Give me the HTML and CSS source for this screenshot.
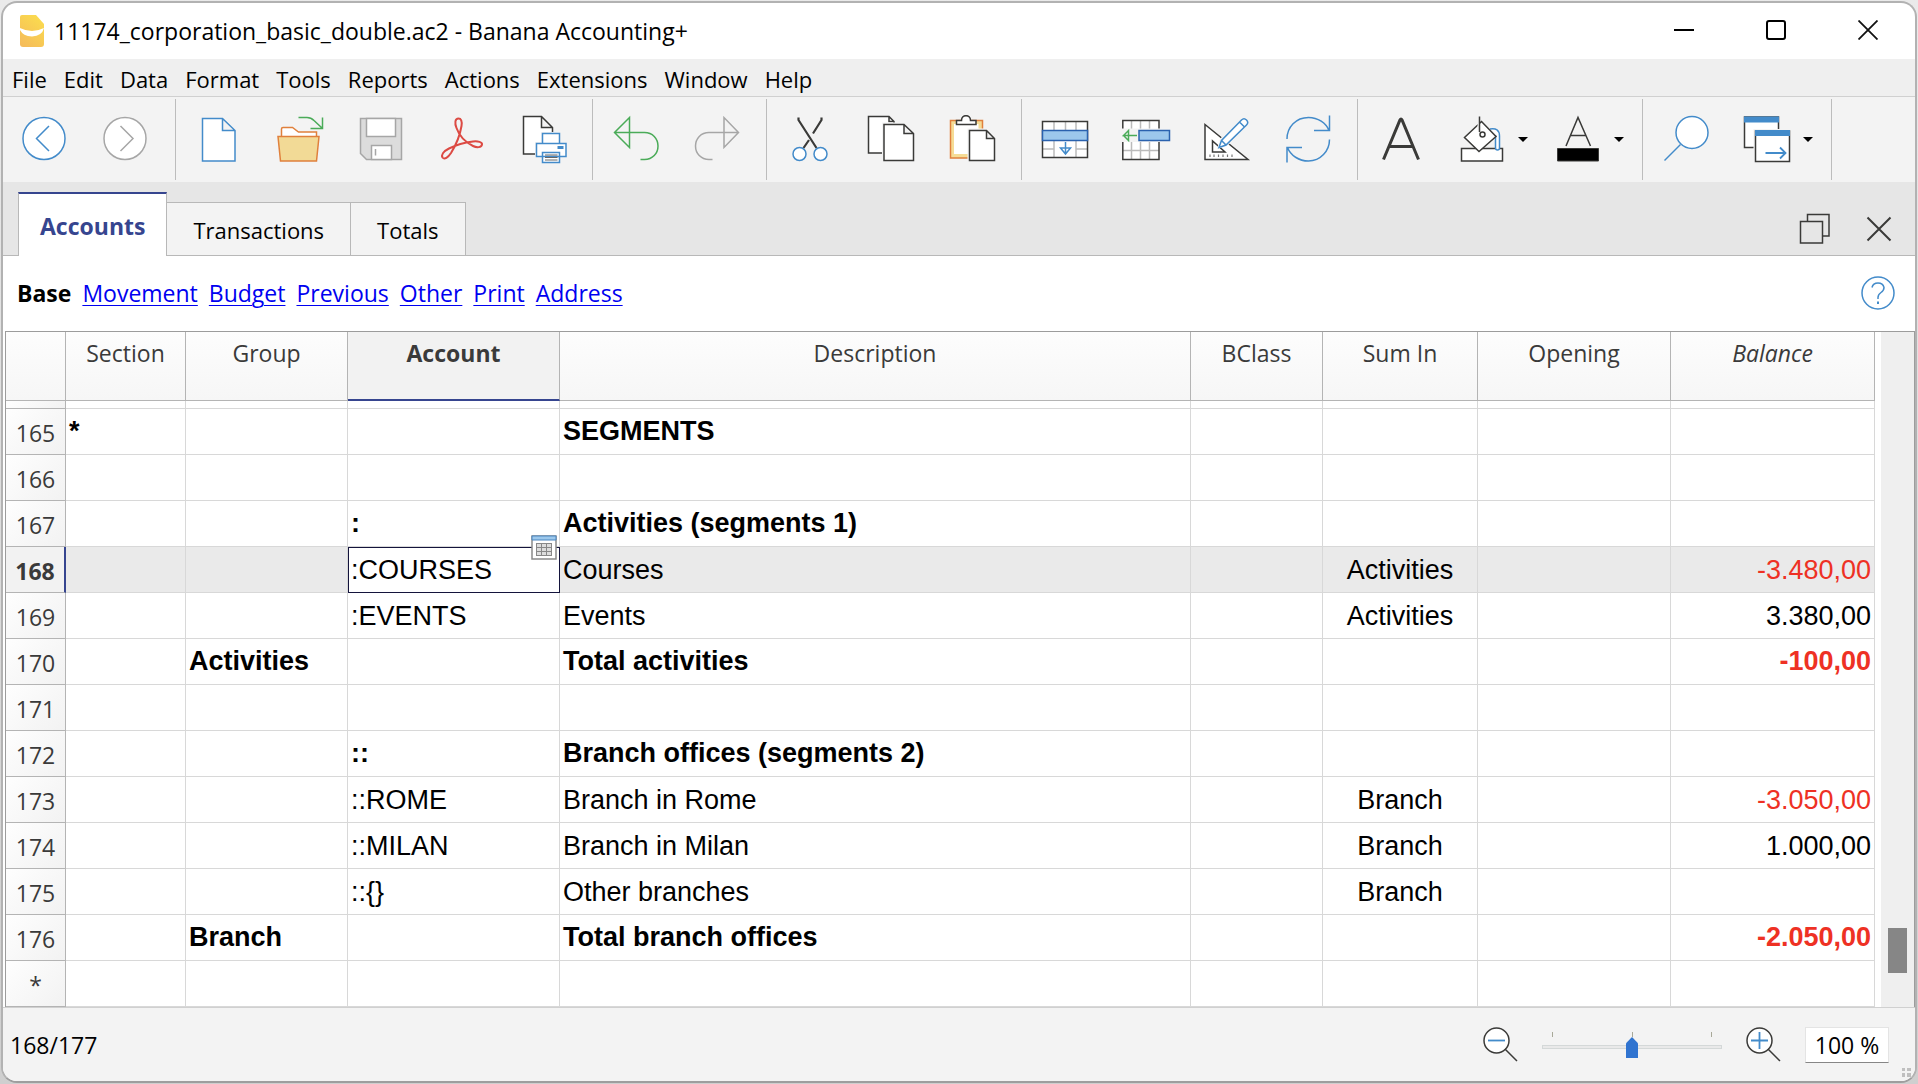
FILE: index.html
```html
<!DOCTYPE html>
<html lang="en">
<head>
<meta charset="utf-8">
<meta name="viewport" content="width=device-width, initial-scale=1">
<title>11174_corporation_basic_double.ac2 - Banana Accounting+</title>
<link rel="stylesheet" href="styles.css">
</head>
<body>
<div class="window">
  <header class="titlebar">
    <svg class="app-icon" viewBox="0 0 26 34" aria-hidden="true">
      <defs><linearGradient id="banana" x1="0.8" y1="0" x2="0.2" y2="1"><stop offset="0" stop-color="#fbdc4e"/><stop offset="1" stop-color="#f5bc5a"/></linearGradient></defs>
      <path d="M3 1H17L25 10V30Q25 33 22 33H4Q1 33 1 30V3Q1 1 3 1Z" fill="url(#banana)"/>
      <path d="M1 14Q13 20 25 14Q23 22 13 22.500Q4 22 1 16Z" fill="#fff"/>
    </svg>
    <h1 class="title">11174_corporation_basic_double.ac2 - Banana Accounting+</h1>
    <div class="window-controls">
      <button type="button" aria-label="Minimize"><svg viewBox="0 0 20 20"><path d="M0 10H20" stroke="#000" stroke-width="2"/></svg></button>
      <button type="button" aria-label="Maximize"><svg viewBox="0 0 20 20"><rect x="1" y="1" width="18" height="18" rx="2" fill="none" stroke="#000" stroke-width="2"/></svg></button>
      <button type="button" aria-label="Close"><svg viewBox="0 0 20 20"><path d="M0.500 0.500L19.500 19.500M19.500 0.500L0.500 19.500" stroke="#111" stroke-width="1.800"/></svg></button>
    </div>
  </header>

  <nav class="menubar" aria-label="Menu">
    <button type="button">File</button>
    <button type="button">Edit</button>
    <button type="button">Data</button>
    <button type="button">Format</button>
    <button type="button">Tools</button>
    <button type="button">Reports</button>
    <button type="button">Actions</button>
    <button type="button">Extensions</button>
    <button type="button">Window</button>
    <button type="button">Help</button>
  </nav>

  <div class="toolbar" role="toolbar" aria-label="Main tools">
    <div class="tool-group">
      <button type="button" aria-label="Back"><svg viewBox="0 0 49 49"><circle cx="25" cy="23.500" r="21" class="wb"/><path d="M30 11L17.500 23.500L30 36" class="b"/></svg></button>
      <button type="button" aria-label="Forward"><svg viewBox="0 0 49 49"><circle cx="25" cy="23.500" r="21" class="wg"/><path d="M20.500 11L33 23.500L20.500 36" class="g"/></svg></button>
    </div>
    <div class="tool-group">
      <button type="button" aria-label="New"><svg viewBox="0 0 49 49"><path d="M7.500 3.500H27.500L40 15.500V46H7.500ZM27.500 3.500V15.500H40" class="wb"/></svg></button>
      <button type="button" aria-label="Open"><svg viewBox="0 0 49 49"><path d="M5.500 21.500V14Q5.500 12.500 7 12.500H16.500L22.500 17H40.500V21.500" fill="#fff" stroke="#e0803c" stroke-width="1.500"/><path d="M2 21.500H43L40.500 46H4.500Z" fill="#f2da96" stroke="#e0803c" stroke-width="1.500"/><path d="M22.500 2.500H31Q35 2.500 38 5.500L46 13M46.500 2.500V13.500H34.500" class="gr"/></svg></button>
      <button type="button" aria-label="Save"><svg viewBox="0 0 49 49"><path d="M3.500 3.500H44.500V44.500H9.500L3.500 38.500Z" fill="#dcdcdc" stroke="#a6a6a6" stroke-width="1.500"/><path d="M9.500 3.500H38.500V21.500H9.500ZM14.500 30.500H34.500V44.500H14.500Z" class="wg"/><path d="M18.500 34V40.500" class="g"/></svg></button>
      <button type="button" aria-label="Export PDF"><svg viewBox="0 0 49 49"><path d="M20.500 3.500C17 3.500 16.500 8 18.500 13C21 20 27 27 35 31C39 33 43.500 32.500 44 29.500C44.500 27 40 26 35 26.500C27 27.500 18 30 11 33.500C5 36.500 3 40 4.500 42.500C6.500 45 10 42.500 13 38C18 30 22 20 23.500 11C24.300 6 23 3.500 20.500 3.500Z" fill="none" stroke="#dc4a43" stroke-width="2"/></svg></button>
      <button type="button" aria-label="Print"><svg viewBox="0 0 49 49"><path d="M4.500 1.500H22.500L33.500 12.500V39H4.500ZM22.500 1.500V12.500H33.500" class="wk"/><path d="M16 27H22V17H43V27H49V43H43V49H22V43H16Z" fill="#f3f3f3"/><path d="M23.500 18.500H40.500V28.500H23.500ZM17.500 28.500H47V41.500H17.500ZM23.500 37.500H40.500V47.500H23.500Z" class="wb"/><path d="M38.500 32.500H44.500" stroke="#438bca" stroke-width="3"/><path d="M26 40H38.500M26 42.500H38.500M26 45H38.500" stroke="#666" stroke-width="1.200"/></svg></button>
    </div>
    <div class="tool-group">
      <button type="button" aria-label="Undo"><svg viewBox="0 0 49 49"><path d="M17.500 2.500V32.500L2.500 17.500ZM2.500 17.500H32.500C40.500 17.500 46 23.500 46 31S40.500 44.500 32.500 44.500H28.500" class="gr"/></svg></button>
      <button type="button" aria-label="Redo"><svg viewBox="0 0 49 49"><path d="M31 2.500V32.500L45.500 17.500ZM45.500 17.500H16C8 17.500 2.500 23.500 2.500 31S8 44.500 16 44.500H19.500" class="g"/></svg></button>
    </div>
    <div class="tool-group">
      <button type="button" aria-label="Cut"><svg viewBox="0 0 49 49"><path d="M12.500 2.500V5L30.500 33M35.500 2.500V5L27 18.500M23 25L17.500 33" fill="none" stroke="#3a3a38" stroke-width="2.200"/><circle cx="13.500" cy="39" r="6.500" class="wb"/><circle cx="34.500" cy="39" r="6.500" class="wb"/></svg></button>
      <button type="button" aria-label="Copy"><svg viewBox="0 0 49 49"><path d="M1.500 1.500H22L27 6.500V38H1.500ZM22 1.500V6.500H27" class="wk"/><path d="M15 7.500H38L49 18V49H15Z" fill="#f3f3f3"/><path d="M17 9.500H37L46.500 18.500V45.500H17ZM37 9.500V18.500H46.500" class="wk"/></svg></button>
      <button type="button" aria-label="Paste"><svg viewBox="0 0 49 49"><path d="M2.500 5.500H34.500V43H2.500Z" fill="#f5dc96" stroke="#e0803c" stroke-width="1.500"/><path d="M6 9H30.500V39H6Z" fill="#fff"/><path d="M8.500 5.500H13.500C13.500 -1 22.500 -1 22.500 5.500H28V9.500H8.500Z" class="wk"/><path d="M19.500 13.500H40L49 22V48H19.500Z" fill="#f3f3f3"/><path d="M21.500 15.500H38.500L46.500 23.500V45.500H21.500ZM38.500 15.500V23.500H46.500" class="wk"/></svg></button>
    </div>
    <div class="tool-group">
      <button type="button" aria-label="Add rows"><svg viewBox="0 0 49 49"><path d="M1.500 6.500H46.500V42.500H1.500Z" fill="#fff"/><path d="M13 6.500V42.500M24.500 6.500V16M35 6.500V42.500M1.500 34H13M35 34H46.500" stroke="#bbb" stroke-width="1.500"/><path d="M1.500 6.500H46.500V42.500H1.500Z" fill="none" stroke="#3a3a38" stroke-width="1.500"/><path d="M1.500 15.500H46.500V25.500H1.500Z" class="bar"/><path d="M24.500 27V39M19.500 33H29.500L24.500 39Z" class="b"/></svg></button>
      <button type="button" aria-label="Delete rows"><svg viewBox="0 0 49 49"><path d="M0.800 5.500H37V44.500H0.800Z" fill="#fff"/><path d="M9.500 6V14M18.500 6V14M27.500 6V14M9.500 27V44M18.500 27V44M27.500 27V44M1 35.500H37" stroke="#bbb" stroke-width="1.500"/><path d="M0 13.500H38V27H0Z" fill="#f3f3f3"/><path d="M0.800 13.500V5.500H37V13.500M0.800 27V44.500H37V27" fill="none" stroke="#3a3a38" stroke-width="1.500"/><path d="M17 15.500H47.500V25.500H17Z" class="bar"/><path d="M15 20.500H1.500L6.500 15.500V25.500L1.500 20.500" class="gr"/></svg></button>
      <button type="button" aria-label="Columns setup"><svg viewBox="0 0 49 49"><path d="M2 9.500V44.500H45Z" class="wk"/><path d="M9.500 26V37H22Z" class="wk"/><path d="M7 42V39.500M11 42V39.500M15.500 42V39.500M20 42V39.500M24.500 42V39.500M29 42V39.500" stroke="#777" stroke-width="1.200"/><path d="M14 34L17 24L37 2L42 1L47 7L46 11L24 31Z" fill="#f3f3f3"/><path d="M16 32.500L18.500 25.500L38.500 5Q41 2.500 43.500 5T43.500 10L23 30ZM18.500 25.500L23 30M36.500 7L41.500 12" class="wb"/></svg></button>
      <button type="button" aria-label="Recalculate"><svg viewBox="0 0 49 49"><path d="M3 24C3 12 12 2.500 24.500 2.500C34 2.500 42 8 45 15.500M45.500 0.500V15.500H30M45.500 24.500C45.500 36 36.500 46 24.500 46C15 46 6.500 40.500 3.500 32.500M3 47.500V32.500H18" class="b"/></svg></button>
    </div>
    <div class="tool-group">
      <button type="button" aria-label="Font"><svg viewBox="0 0 49 49"><path d="M6.500 44.500L23 5Q24 3 25 5L41.500 44.500M12 31.500H36" fill="none" stroke="#3a3a38" stroke-width="3"/></svg></button>
      <button type="button" class="with-menu" aria-label="Background color"><svg viewBox="0 0 49 49"><path d="M3.500 33.500H44.500V46H3.500Z" class="wk"/><path d="M32 14C38 13 41.500 15 41.500 21V33Q41.500 35 39.500 35T37.500 33V20" class="wb"/><path d="M23.500 6.500L38 21.500L21 36.500L6.500 22.500Z" class="wk"/><path d="M19.500 1V15H21V1Z" fill="#f3f3f3"/><path d="M21.500 1.500V17" class="k"/><circle cx="24.500" cy="19.500" r="2.500" class="wk"/></svg><span class="caret"></span></button>
      <button type="button" class="with-menu" aria-label="Text color"><svg viewBox="0 0 49 49"><path d="M3.500 33.500H44.500V46H3.500Z" fill="#000" stroke="#3a3a38"/><path d="M12 31L24 2.500L36.500 31M16.500 20.500H32" class="k"/></svg><span class="caret"></span></button>
    </div>
    <div class="tool-group">
      <button type="button" aria-label="Find"><svg viewBox="0 0 49 49"><circle cx="30" cy="17.500" r="16" class="wb"/><path d="M18.500 29.500L2.500 45.500" class="b"/></svg></button>
      <button type="button" class="with-menu" aria-label="Windows"><svg viewBox="0 0 49 49"><path d="M1.500 2H35.500V32.500H1.500Z" class="wk"/><path d="M10.500 14H38V34H10.500Z" fill="#f3f3f3"/><path d="M1 4.500H36" stroke="#438bca" stroke-width="6"/><path d="M12.500 16H46.500V46.500H12.500Z" class="wk"/><path d="M12 18H47" stroke="#438bca" stroke-width="6"/><path d="M22.500 38H42.500M37 32.500L42.500 38L37 43.500" fill="none" stroke="#438bca" stroke-width="1.800"/></svg><span class="caret"></span></button>
    </div>
  </div>

  <div class="tabbar">
    <div class="tabs" role="tablist">
      <button type="button" role="tab" aria-selected="true" class="tab active">Accounts</button>
      <button type="button" role="tab" aria-selected="false" class="tab">Transactions</button>
      <button type="button" role="tab" aria-selected="false" class="tab">Totals</button>
    </div>
    <div class="tab-controls">
      <button type="button" aria-label="Restore table"><svg viewBox="0 0 32 32"><path d="M8.500 8.500V1.500H30V23H23.500M1.500 8.500H23.500V30H1.500Z" fill="none" stroke="#3a3a38" stroke-width="1.500"/></svg></button>
      <button type="button" aria-label="Close table"><svg viewBox="0 0 32 32"><path d="M4.500 4.500L27.500 27.500M27.500 4.500L4.500 27.500" stroke="#3a3a38" stroke-width="2"/></svg></button>
    </div>
  </div>

  <div class="viewbar">
    <nav class="views" aria-label="Views">
      <strong>Base</strong>
      <a href="#movement">Movement</a>
      <a href="#budget">Budget</a>
      <a href="#previous">Previous</a>
      <a href="#other">Other</a>
      <a href="#print">Print</a>
      <a href="#address">Address</a>
    </nav>
    <button type="button" class="help" aria-label="Help"><svg viewBox="0 0 34 34"><circle cx="17" cy="17" r="16" fill="none" stroke="#438bca" stroke-width="1.500"/><path d="M11 11.500Q12 7 17 7T23 11.500Q23 14.500 20 16.500T17 21.500V23" fill="none" stroke="#438bca" stroke-width="1.500"/><path d="M17 25.500V28" stroke="#438bca" stroke-width="2"/></svg></button>
  </div>

  <main class="sheet">
    <table class="grid">
      <colgroup><col class="c-num"><col class="c-section"><col class="c-group"><col class="c-account"><col><col class="c-bclass"><col class="c-sum"><col class="c-opening"><col class="c-balance"></colgroup>
      <thead>
        <tr><th></th><th>Section</th><th>Group</th><th class="current">Account</th><th>Description</th><th>BClass</th><th>Sum In</th><th>Opening</th><th class="computed">Balance</th></tr>
      </thead>
      <tbody>
        <tr class="clipped"><th></th><td></td><td></td><td></td><td></td><td></td><td></td><td></td><td></td></tr>
        <tr class="strong"><th>165</th><td>*</td><td></td><td></td><td>SEGMENTS</td><td></td><td></td><td></td><td></td></tr>
        <tr><th>166</th><td></td><td></td><td></td><td></td><td></td><td></td><td></td><td></td></tr>
        <tr class="strong"><th>167</th><td></td><td></td><td>:</td><td>Activities (segments 1)</td><td></td><td></td><td></td><td></td></tr>
        <tr class="selected"><th>168</th><td></td><td></td><td class="cursor">:COURSES<button type="button" class="lookup" aria-label="Show list"><svg viewBox="0 0 26 25"><path d="M1 1H25V24H1Z" fill="#fff" stroke="#8a8a8a" stroke-width="1.500"/><path d="M1 1H25V5H1Z" fill="#9cc8ec" stroke="#4a86c0"/><path d="M5 8H21V21H5Z" fill="#ddd"/><path d="M5 8.500H21M5 12.500H21M5 16.500H21M5 20.500H21M5.500 8V21M10.500 8V21M15.500 8V21M20.500 8V21" stroke="#888"/></svg></button></td><td>Courses</td><td></td><td>Activities</td><td></td><td class="negative">-3.480,00</td></tr>
        <tr><th>169</th><td></td><td></td><td>:EVENTS</td><td>Events</td><td></td><td>Activities</td><td></td><td>3.380,00</td></tr>
        <tr class="strong"><th>170</th><td></td><td>Activities</td><td></td><td>Total activities</td><td></td><td></td><td></td><td class="negative">-100,00</td></tr>
        <tr><th>171</th><td></td><td></td><td></td><td></td><td></td><td></td><td></td><td></td></tr>
        <tr class="strong"><th>172</th><td></td><td></td><td>::</td><td>Branch offices (segments 2)</td><td></td><td></td><td></td><td></td></tr>
        <tr><th>173</th><td></td><td></td><td>::ROME</td><td>Branch in Rome</td><td></td><td>Branch</td><td></td><td class="negative">-3.050,00</td></tr>
        <tr><th>174</th><td></td><td></td><td>::MILAN</td><td>Branch in Milan</td><td></td><td>Branch</td><td></td><td>1.000,00</td></tr>
        <tr><th>175</th><td></td><td></td><td>::{}</td><td>Other branches</td><td></td><td>Branch</td><td></td><td></td></tr>
        <tr class="strong"><th>176</th><td></td><td>Branch</td><td></td><td>Total branch offices</td><td></td><td></td><td></td><td class="negative">-2.050,00</td></tr>
        <tr><th>*</th><td></td><td></td><td></td><td></td><td></td><td></td><td></td><td></td></tr>
      </tbody>
    </table>
    <div class="scrollbar" aria-hidden="true"><div class="thumb"></div></div>
  </main>

  <footer class="statusbar">
    <span class="position">168/177</span>
    <div class="zoom">
      <button type="button" aria-label="Zoom out"><svg viewBox="0 0 35 35"><circle cx="13.500" cy="13.500" r="12.500" fill="#fff" stroke="#3a3a38" stroke-width="1.500"/><path d="M22 22L34 34" stroke="#3a3a38" stroke-width="1.500"/><path d="M5 13.500H22" stroke="#438bca" stroke-width="1.800"/></svg></button>
      <div class="slider">
        <div class="ticks"><i></i><i></i><i></i></div>
        <input type="range" min="0" max="200" value="100" aria-label="Zoom">
      </div>
      <button type="button" aria-label="Zoom in"><svg viewBox="0 0 35 35"><circle cx="13.500" cy="13.500" r="12.500" fill="#fff" stroke="#3a3a38" stroke-width="1.500"/><path d="M22 22L34 34" stroke="#3a3a38" stroke-width="1.500"/><path d="M5 13.500H22M13.500 5V22" stroke="#438bca" stroke-width="1.800"/></svg></button>
      <input type="text" class="percent" value="100 %" aria-label="Zoom percentage">
    </div>
    <svg class="grip" viewBox="0 0 9 9" aria-hidden="true"><path d="M0 0H3V3H0ZM5 0H9V3H5ZM0 5H3V9H0ZM5 5H9V9H5Z" fill="#bfbfbf"/></svg>
  </footer>
</div>
</body>
</html>
```

FILE: styles.css
```css
* {
  box-sizing: border-box;
}

body {
  margin: 0;
  padding: 1px;
  min-height: 100vh;
  display: flex;
  background: linear-gradient(#eaeaea, #cfcfcf);
  font-family: "Open Sans", "Noto Sans", sans-serif;
  font-size: 23px;
  line-height: 30px;
  color: #000;
}

button {
  display: flex;
  align-items: center;
  justify-content: center;
  margin: 0;
  padding: 0;
  border: 0;
  background: none;
  font: inherit;
  color: inherit;
}

svg {
  display: block;
  flex: none;
}

.window {
  flex: 1;
  min-width: 0;
  display: flex;
  flex-direction: column;
  border: 2px solid #b2b2b2;
  border-bottom-color: #9e9e9e;
  border-radius: 16px;
  background: #fff;
  overflow: hidden;
}

/* Title bar */
.titlebar {
  display: flex;
  align-items: center;
  height: 56px;
  padding: 0 37px 0 15px;
}

.app-icon {
  width: 28px;
  height: 34px;
}

.title {
  margin: 0 0 0 8px;
  font-size: 23px;
  font-weight: 400;
  white-space: nowrap;
}

.window-controls {
  display: flex;
  gap: 72px;
  margin-left: auto;
  padding-bottom: 2px;
}

.window-controls svg {
  width: 20px;
  height: 20px;
}

/* Menu */
.menubar {
  display: flex;
  align-items: center;
  gap: 17px;
  height: 38px;
  padding: 2px 9px 0;
  background: #efefef;
  border-bottom: 1px solid #d0d0d0;
  font-size: 22px;
}

/* Toolbar */
.toolbar {
  display: flex;
  height: 85px;
  padding: 2px 0;
  background: #f3f3f3;
}

.tool-group {
  display: flex;
  padding: 0 8px 0 3px;
  border-right: 1px solid #bcbcbc;
}

.tool-group:first-child {
  padding: 0 10px 0 0;
}

.tool-group button {
  width: 81px;
}

.tool-group .with-menu {
  width: 96px;
  justify-content: flex-start;
  gap: 11px;
  padding-left: 16px;
}

.toolbar svg {
  width: 49px;
  height: 49px;
}

.caret {
  border: 5px solid transparent;
  border-top-color: #000;
  border-bottom: 0;
}

.b, .g, .gr, .k {
  fill: none;
  stroke-width: 1.5;
}

.wb, .wg, .wk {
  fill: #fff;
  stroke-width: 1.5;
}

.b, .wb { stroke: #438bca; }
.g, .wg { stroke: #a6a6a6; }
.k, .wk { stroke: #3a3a38; }
.gr { stroke: #4aab58; }

.bar {
  fill: #9cc8ec;
  stroke: #2a62ae;
  stroke-width: 1.5;
}

/* Tabs */
.tabbar {
  display: flex;
  align-items: flex-end;
  justify-content: space-between;
  height: 74px;
  padding: 0 20px 0 15px;
  background: #e6e6e6;
  box-shadow: inset 0 -1px #b8b8b8;
}

.tabs {
  display: flex;
  align-items: flex-end;
}

.tab {
  height: 54px;
  padding: 2px 26px 0;
  background: #f3f3f3;
  border: 1px solid #b8b8b8;
  border-left-width: 0;
  font-size: 22px;
}

.tab.active {
  height: 64px;
  padding: 2px 21px 0;
  background: #fff;
  border-left-width: 1px;
  border-top: 2px solid #36458f;
  border-bottom: 0;
  font-size: 23px;
  font-weight: 700;
  color: #36458f;
}

.tab-controls {
  display: flex;
  gap: 32px;
  padding-bottom: 11px;
}

.tab-controls svg {
  width: 32px;
  height: 32px;
}

/* Views */
.viewbar {
  display: flex;
  align-items: center;
  justify-content: space-between;
  height: 75px;
  padding: 0 20px 1px 14px;
}

.views {
  display: flex;
  gap: 11px;
}

.views a {
  color: #0000f0;
  text-decoration-thickness: 1px;
  text-underline-offset: 3px;
}

.help svg {
  width: 34px;
  height: 34px;
}

/* Accounts table */
.sheet {
  flex: 1;
  display: flex;
  gap: 6px;
  margin-left: 2px;
  border: 1px solid #9c9c9c;
  border-width: 1px 1px 0;
}

.grid {
  flex: 1;
  align-self: flex-start;
  min-width: 0;
  table-layout: fixed;
  border-collapse: separate;
  border-spacing: 0;
  font-family: "Liberation Sans", Arial, sans-serif;
  font-size: 27px;
}

.c-num { width: 60px; }
.c-section { width: 120px; }
.c-group { width: 162px; }
.c-account { width: 212px; }
.c-bclass { width: 132px; }
.c-sum { width: 155px; }
.c-opening { width: 193px; }
.c-balance { width: 204px; }

.grid th {
  padding: 0;
  font-family: "Open Sans", "Noto Sans", sans-serif;
  font-size: 23px;
  font-weight: 400;
  color: #3a3a3a;
}

.grid thead th {
  height: 69px;
  padding-top: 6px;
  vertical-align: top;
  border-right: 1px solid #b4b4b4;
  border-bottom: 1px solid #b4b4b4;
  background: linear-gradient(#fdfdfd, #f6f6f6);
}

.grid thead .current {
  border-bottom: 2px solid #36458f;
  background: #f2f2f2;
  font-weight: 700;
}

.grid thead .computed {
  font-style: italic;
}

.grid td,
.grid tbody th {
  height: 46px;
  border-right: 1px solid #d8d8d8;
  border-bottom: 1px solid #d8d8d8;
}

.grid td {
  padding: 0 3px;
  white-space: nowrap;
}

.grid tbody th {
  padding-top: 3px;
  border-color: #b4b4b4;
  background: linear-gradient(135deg, #fefefe, #f2f2f2);
}

.grid .clipped td,
.grid .clipped th {
  height: 8px;
}

.grid .strong td {
  padding-bottom: 2px;
  font-weight: 700;
}

.grid td:nth-child(7) {
  text-align: center;
}

.grid td:nth-child(9) {
  text-align: right;
}

.grid .negative {
  color: #ee3124;
}

.grid .selected td {
  background: #eaeaea;
}

.grid .selected th {
  border-right: 2px solid #36458f;
  background: #f2f2f2;
  font-weight: 700;
}

.grid .selected .cursor {
  position: relative;
  background: #fff;
  outline: 1px solid #14143c;
  outline-offset: -1px;
}

.lookup {
  position: absolute;
  right: 2px;
  top: -12px;
}

.lookup svg {
  width: 26px;
  height: 25px;
}

.scrollbar {
  display: flex;
  justify-content: center;
  width: 33px;
  padding-bottom: 34px;
  background: #efefef;
}

.thumb {
  align-self: flex-end;
  width: 19px;
  height: 45px;
  background: #868686;
}

/* Status bar */
.statusbar {
  display: flex;
  align-items: center;
  height: 74px;
  padding: 0 4px 0 7px;
  background: #f3f3f3;
  border-top: 1px solid #d0d0d0;
}

.zoom {
  display: flex;
  align-items: center;
  gap: 24px;
  margin-left: auto;
}

.zoom button svg {
  width: 35px;
  height: 35px;
}

.slider {
  width: 180px;
}

.ticks {
  display: flex;
  justify-content: space-between;
  height: 5px;
  padding: 0 10px;
}

.ticks i {
  width: 1px;
  background: #a8a898;
}

.slider input {
  display: block;
  width: 100%;
  height: 21px;
  margin: 0;
  appearance: none;
  background: none;
}

.slider input::-webkit-slider-runnable-track {
  height: 4px;
  background: #e9e9e9;
  border: 1px solid #d4d8d8;
}

.slider input::-webkit-slider-thumb {
  appearance: none;
  width: 12px;
  height: 21px;
  margin-top: -9px;
  background: #3074d0;
  clip-path: polygon(50% 0, 100% 30%, 100% 100%, 0 100%, 0 30%);
}

.percent {
  width: 84px;
  height: 36px;
  padding: 0;
  border: 1px solid #e4e4e4;
  border-bottom-color: #868686;
  background: #fff;
  font: inherit;
  text-align: center;
}

.grip {
  align-self: flex-end;
  width: 9px;
  height: 9px;
  margin: 0 0 4px 13px;
}
```
